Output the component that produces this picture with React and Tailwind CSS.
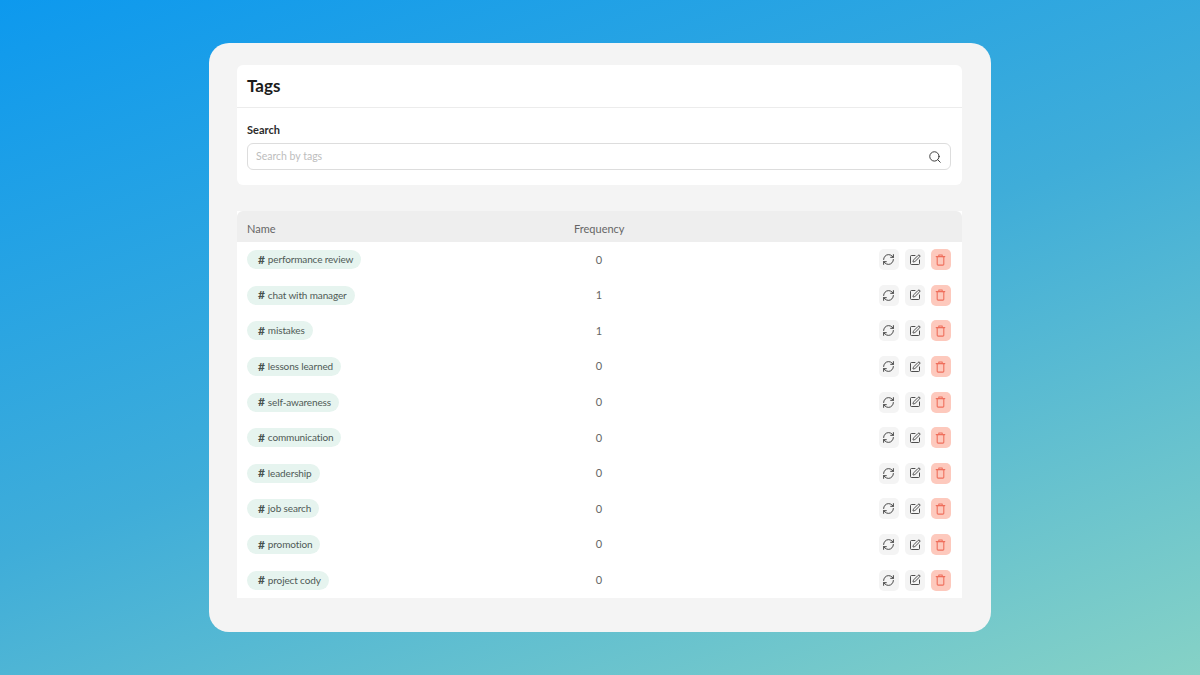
import { RefreshCw, Search, SquarePen } from "lucide-react";

const tags = [
  { name: "performance review", count: 0 },
  { name: "chat with manager", count: 1 },
  { name: "mistakes", count: 1 },
  { name: "lessons learned", count: 0 },
  { name: "self-awareness", count: 0 },
  { name: "communication", count: 0 },
  { name: "leadership", count: 0 },
  { name: "job search", count: 0 },
  { name: "promotion", count: 0 },
  { name: "project cody", count: 0 },
];

function TrashIcon() {
  return (
    <svg width="11" height="12" viewBox="0 0 11 12" fill="none" stroke="#ef6f5c" strokeWidth="1.1" strokeLinecap="round" strokeLinejoin="round">
      <path d="M1.2 2.6h8.6" />
      <path d="M3.8 2.6V1h3.4v1.6" />
      <path d="M2.2 2.6v7.6c0 .5.4.9.9.9h4.8c.5 0 .9-.4.9-.9V2.6" />
    </svg>
  );
}

function TagRow({ tag }) {
  return (
    <div className="flex h-[35.6px] items-center pl-2.5 pr-[11px]">
      <div className="flex w-[327px]">
        <span className="flex h-[19px] items-center rounded-full bg-[#e6f4ef] pl-[11px] pr-[8px] text-[10px] tracking-[-0.13px] text-[#4f5a56]">
          <span className="mr-[3px] text-[12px] font-bold text-[#47524e]">#</span>
          {tag.name}
        </span>
      </div>
      <div className="w-[50px] text-center text-[11px] text-[#666666]">{tag.count}</div>
      <div className="ml-auto flex gap-[5.5px]">
        <button className="flex h-[21px] w-[20.5px] items-center justify-center rounded-[5px] bg-[#f4f4f4] text-[#3a3a3a]">
          <RefreshCw size={13} strokeWidth={1.7} />
        </button>
        <button className="flex h-[21px] w-[20.5px] items-center justify-center rounded-[5px] bg-[#f4f4f4] text-[#3a3a3a]">
          <SquarePen size={12} strokeWidth={1.8} />
        </button>
        <button className="flex h-[21px] w-[20.5px] items-center justify-center rounded-[5px] bg-[#fdc9bd]">
          <TrashIcon />
        </button>
      </div>
    </div>
  );
}

export default function App() {
  return (
    <div className="flex h-[675px] w-[1200px] items-start justify-center overflow-hidden bg-[linear-gradient(160deg,#0d99ee_0%,#3fadd9_50%,#86d2c6_100%)] pt-[43px] font-['Lato',sans-serif]">
      <div className="h-[589px] w-[782px] rounded-[20px] bg-[#f4f4f4] pl-[28px] pr-[29px] pt-[22px]">
        {/* Search card */}
        <div className="h-[120px] rounded-[6px] bg-white">
          <div className="flex h-[43px] items-center border-b border-[#ececec] px-2.5">
            <h1 className="text-[17px] font-bold text-[#1c1c1c]">Tags</h1>
          </div>
          <div className="pl-2.5 pr-[11px] pt-[15px]">
            <label className="block text-[11px] leading-[14px] font-bold text-[#2b2b2b]">Search</label>
            <div className="mt-[6px] flex h-[27px] items-center justify-between rounded-[6px] border border-[#dddddd] pl-2 pr-[8px]">
              <span className="text-[10.5px] text-[#bdbdbd]">Search by tags</span>
              <Search size={14} strokeWidth={1.6} className="text-[#333333]" />
            </div>
          </div>
        </div>

        {/* Tags table */}
        <div className="mt-[26px] bg-white">
          <div className="flex h-[31px] items-center rounded-t-[6px] bg-[#eeeeee] pl-2.5 pt-[6px] text-[11px] text-[#666666]">
            <div className="w-[327px]">Name</div>
            <div>Frequency</div>
          </div>
          {tags.map((tag) => (
            <TagRow key={tag.name} tag={tag} />
          ))}
        </div>
      </div>
    </div>
  );
}
